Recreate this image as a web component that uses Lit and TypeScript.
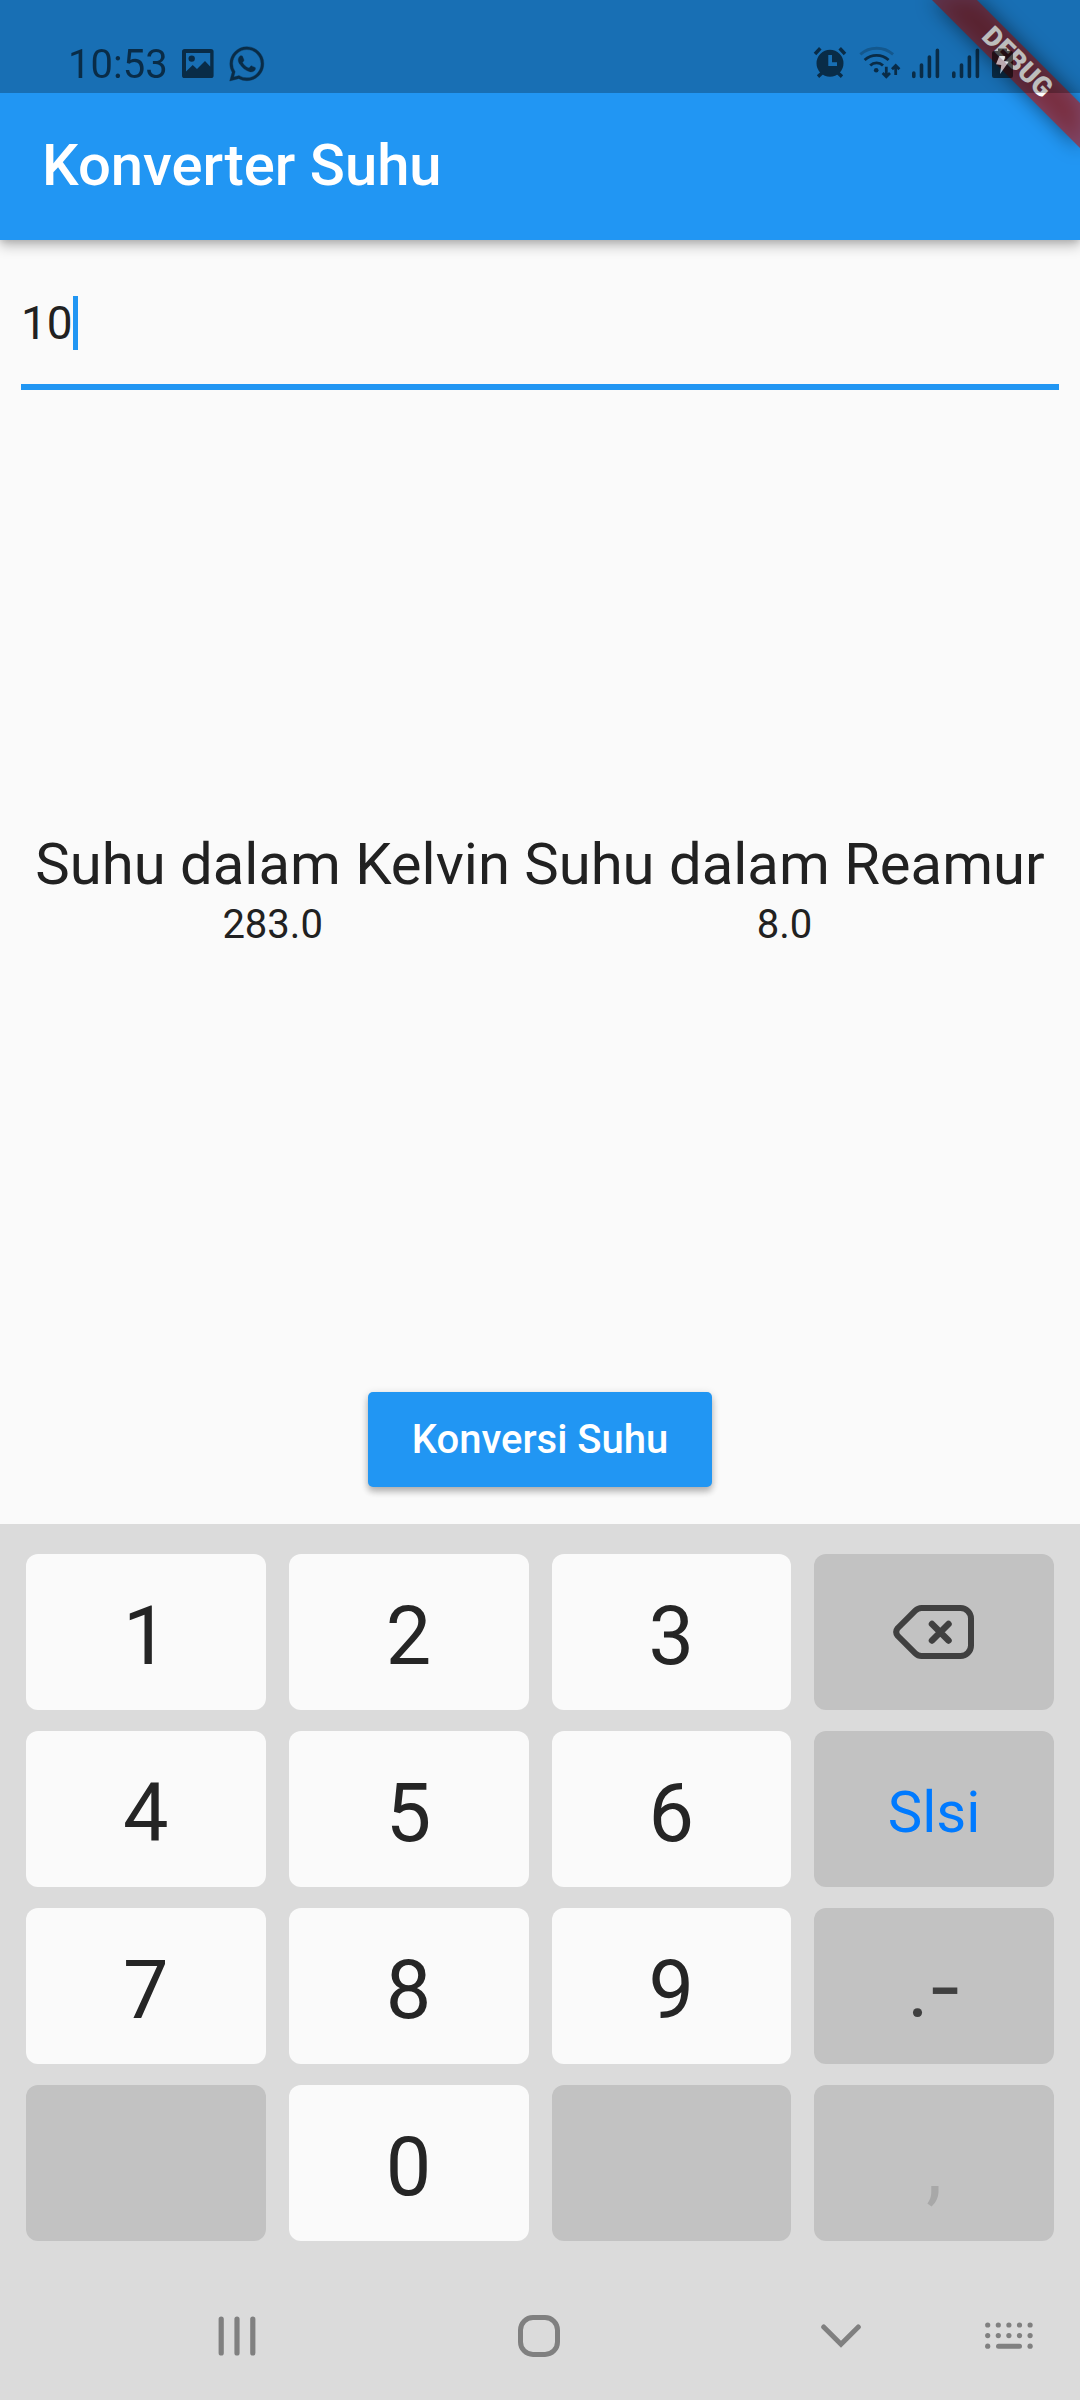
import { LitElement, html, svg, css, nothing } from "lit";
import { customElement, property, state } from "lit/decorators.js";
import { classMap } from "lit/directives/class-map.js";

const signalBars = html`
  <svg width="28" height="40" viewBox="0 0 28 40" aria-hidden="true">
    <g stroke="#000" stroke-width="3.6" stroke-linecap="round">
      <path d="M1.8 29V32.4M9.5 21V32.4M17.4 13V32.4M25.4 6.4V32.4" />
    </g>
  </svg>
`;

@customElement("status-bar")
class StatusBar extends LitElement {
  static styles = css`
    :host {
      display: flex;
      justify-content: space-between;
      align-items: flex-end;
      box-sizing: border-box;
      height: 93px;
      padding: 0 66px 9px 68px;
      background: rgba(0, 0, 0, 0.26);
    }
    .group {
      display: flex;
      align-items: flex-end;
      gap: 12px;
      opacity: 0.6;
    }
    .left {
      gap: 14px;
    }
    .time {
      font-size: 40px;
      line-height: 38px;
      color: #000;
    }
    svg {
      display: block;
      overflow: visible;
    }
  `;

  render() {
    return html`
      <div class="group left">
        <span class="time">10:53</span>
        <svg width="33" height="40" viewBox="0 0 33 40" aria-hidden="true">
          <path
            fill-rule="evenodd"
            d="M2.6 5H29a2.6 2.6 0 0 1 2.6 2.6V31.400a2.600 2.600 0 0 1-2.600 2.600H2.600A2.600 2.600 0 0 1 0 31.400V7.600A2.600 2.600 0 0 1 2.600 5ZM4 9V27.500L10.700 21L15 25L23 17L28.200 22.500V9Z"
          />
          <circle cx="9.700" cy="14.600" r="3.200" />
        </svg>
        <svg width="36" height="40" viewBox="0 0 36 40" aria-hidden="true">
          <path
            transform="translate(.6 2.700) scale(1.43)"
            stroke="#000"
            stroke-width=".25"
            d="M17.472 14.382c-.297-.149-1.758-.867-2.03-.967-.273-.099-.471-.148-.67.15-.197.297-.767.966-.94 1.164-.173.199-.347.223-.644.075-.297-.15-1.255-.463-2.39-1.475-.883-.788-1.48-1.761-1.653-2.059-.173-.297-.018-.458.13-.606.134-.133.298-.347.446-.52.149-.174.198-.298.298-.497.099-.198.05-.371-.025-.52-.075-.149-.669-1.612-.916-2.207-.242-.579-.487-.5-.669-.51-.173-.008-.371-.01-.57-.01-.198 0-.52.074-.792.372-.272.297-1.04 1.016-1.04 2.479 0 1.462 1.065 2.875 1.213 3.074.149.198 2.096 3.2 5.077 4.487.709.306 1.262.489 1.694.625.712.227 1.36.195 1.871.118.571-.085 1.758-.719 2.006-1.413.248-.694.248-1.289.173-1.413-.074-.124-.272-.198-.57-.347m-5.421 7.403h-.004a9.87 9.87 0 01-5.031-1.378l-.361-.214-3.741.982.998-3.648-.235-.374a9.86 9.86 0 01-1.51-5.26c.001-5.45 4.436-9.884 9.888-9.884 2.64 0 5.122 1.03 6.988 2.898a9.825 9.825 0 012.893 6.994c-.003 5.45-4.437 9.884-9.885 9.884m8.413-18.297A11.815 11.815 0 0012.05 0C5.495 0 .16 5.335.157 11.892c0 2.096.547 4.142 1.588 5.945L.057 24l6.305-1.654a11.882 11.882 0 005.683 1.448h.005c6.554 0 11.89-5.335 11.893-11.893a11.821 11.821 0 00-3.48-8.413Z"
          />
        </svg>
      </div>
      <div class="group">
        <svg width="34" height="40" viewBox="0 0 34 40" aria-hidden="true">
          <path
            fill-rule="evenodd"
            d="M18 5.800a13.500 13.500 0 1 0 0 27a13.500 13.500 0 1 0 0-27ZM16.300 11H20V18.300H25V22H16.300Z"
          />
          <path
            d="M3 10L8.300 4.300M33 10L27.700 4.300M6 32.600L11 28M30 32.600L25 28"
            stroke="#000"
            stroke-width="3.500"
          />
        </svg>
        <svg width="42" height="40" viewBox="0 0 42 40" aria-hidden="true">
          <g fill="none" stroke="#000" stroke-width="2.800">
            <path d="M2.300 10.400A25 25 0 0 1 35.100 10.400" opacity=".35" />
            <path d="M6.600 16A18 18 0 0 1 30.600 16" />
            <path d="M12.200 21.600A9 9 0 0 1 25 21.600" />
            <path d="M28.300 22.700V32.500M24.600 29L28.300 32.700L32 29" />
            <path d="M37.700 31V21.500M34 25.200L37.700 21.500L41.400 25.200" />
          </g>
          <circle cx="18.200" cy="26.200" r="2.300" />
        </svg>
        ${signalBars} ${signalBars}
        <svg width="22" height="40" viewBox="0 0 22 40" aria-hidden="true">
          <path
            fill-rule="evenodd"
            d="M6 4.500H15V7H19a2 2 0 0 1 2 2V32a2 2 0 0 1-2 2H2A2 2 0 0 1 0 32V9A2 2 0 0 1 2 7H6Z"
          />
          <path fill="#fff" d="M7.300 12H13.300L12 17L16.700 17.700L8 30L9.300 21L4 20.300Z" />
        </svg>
      </div>
    `;
  }
}

@customElement("debug-ribbon")
class DebugRibbon extends LitElement {
  static styles = css`
    :host {
      position: absolute;
      top: 0;
      right: 0;
      pointer-events: none;
    }
    svg {
      display: block;
    }
    text {
      font-family: Roboto, sans-serif;
      font-size: 27px;
      font-weight: 900;
      fill: #fff;
      text-anchor: middle;
    }
  `;

  render() {
    return html`
      <svg width="240" height="240" viewBox="0 0 240 240">
        <defs>
          <filter id="soft" x="-50%" y="-50%" width="200%" height="200%">
            <feGaussianBlur stdDeviation="10" />
          </filter>
        </defs>
        <path d="M92 0H137L240 103V148Z" fill="#000" fill-opacity=".5" filter="url(#soft)" />
        <path d="M92 0H137L240 103V148Z" fill="#b71c1c" fill-opacity=".627" />
        <text transform="translate(177.500 62) rotate(45)" y="9">DEBUG</text>
      </svg>
    `;
  }
}

type Key = { label: string; kind: "digit" | "erase" | "done" | "sign" | "blank" | "comma"; name?: string };

const KEYS: Key[] = [
  { label: "1", kind: "digit" },
  { label: "2", kind: "digit" },
  { label: "3", kind: "digit" },
  { label: "", kind: "erase", name: "Hapus" },
  { label: "4", kind: "digit" },
  { label: "5", kind: "digit" },
  { label: "6", kind: "digit" },
  { label: "Slsi", kind: "done" },
  { label: "7", kind: "digit" },
  { label: "8", kind: "digit" },
  { label: "9", kind: "digit" },
  { label: ".−", kind: "sign" },
  { label: "", kind: "blank", name: "Kosong" },
  { label: "0", kind: "digit" },
  { label: "", kind: "blank", name: "Kosong" },
  { label: ",", kind: "comma" },
];

const DOTS = [0, 1, 2, 3, 4].flatMap((c) =>
  [0, 1, 2].filter((r) => r < 2 || c === 0 || c === 4).map((r) => [2.7 + c * 10.6, 3 + r * 10.6])
);

const eraseIcon = html`
  <svg width="82" height="54" viewBox="0 0 82 54" aria-hidden="true">
    <g fill="none" stroke="#404040" stroke-width="6" stroke-linecap="round">
      <path
        d="M28.500 3H67.500A10.500 10.500 0 0 1 78 13.500V40.500A10.500 10.500 0 0 1 67.500 51H28.500Q25 51 22.300 48.300L4.700 30.800Q1.700 27 4.700 23.200L22.300 5.700Q25 3 28.500 3Z"
      />
      <path d="M39 19L55.500 35.500M55.500 19L39 35.500" stroke-width="6.500" />
    </g>
  </svg>
`;

@customElement("number-pad")
class NumberPad extends LitElement {
  static styles = css`
    :host {
      display: block;
      background: #dbdbdb;
    }
    button {
      font: inherit;
      border: 0;
      margin: 0;
      padding: 0;
      background: none;
      display: flex;
      align-items: center;
      justify-content: center;
    }
    .keys {
      display: grid;
      grid-template-columns: repeat(4, 1fr);
      grid-auto-rows: 156px;
      gap: 21px 23px;
      padding: 30px 26px;
    }
    .key {
      border-radius: 12px;
      background: #c2c2c2;
      color: #404040;
      font-size: 81px;
      line-height: 96px;
      padding-top: 10px;
    }
    .digit {
      background: #fafafa;
      color: #252525;
    }
    .erase {
      padding-top: 0;
    }
    .done {
      color: #007aff;
      font-size: 58px;
      padding-top: 6px;
    }
    .dash {
      font-size: 58px;
      font-weight: 700;
      vertical-align: 0.1em;
    }
    .comma {
      color: #a8a8a8;
    }
    .nav {
      display: grid;
      grid-template-columns: 9fr 9fr 5fr 72px;
      padding: 0 35px 0 201px;
    }
    .nav button {
      width: 72px;
      height: 129px;
    }
    svg {
      display: block;
    }
  `;

  private press(key: Key) {
    this.dispatchEvent(new CustomEvent("key-press", { detail: key }));
  }

  private face(key: Key) {
    if (key.kind === "erase") return eraseIcon;
    if (key.kind === "sign") return html`<span>${key.label[0]}<span class="dash">${key.label[1]}</span></span>`;
    return key.label;
  }

  render() {
    return html`
      <div class="keys">
        ${KEYS.map(
          (key) => html`
            <button
              type="button"
              class=${classMap({ key: true, [key.kind]: true })}
              aria-label=${key.name ?? nothing}
              ?disabled=${key.kind === "blank" || key.kind === "comma"}
              @click=${() => this.press(key)}
            >
              ${this.face(key)}
            </button>
          `
        )}
      </div>
      <nav class="nav">
        <button type="button" aria-label="Terbaru">
          <svg width="38" height="42" viewBox="0 0 38 42" aria-hidden="true">
            <path
              d="M3.200 4V38M19 4V38M34.800 4V38"
              stroke="#808080"
              stroke-width="5.200"
              stroke-linecap="round"
            />
          </svg>
        </button>
        <button type="button" aria-label="Beranda">
          <svg width="42" height="42" viewBox="0 0 42 42" aria-hidden="true">
            <rect
              x="2.500"
              y="2.500"
              width="37"
              height="37"
              rx="12.500"
              fill="none"
              stroke="#808080"
              stroke-width="5"
            />
          </svg>
        </button>
        <button type="button" aria-label="Tutup papan ketik">
          <svg width="40" height="24" viewBox="0 0 40 24" aria-hidden="true">
            <path
              d="M2.700 3L20 20.300L37.300 3"
              fill="none"
              stroke="#808080"
              stroke-width="5"
              stroke-linecap="round"
            />
          </svg>
        </button>
        <button type="button" aria-label="Pilih papan ketik">
          <svg width="48" height="28" viewBox="0 0 48 28" aria-hidden="true">
            ${DOTS.map(([x, y]) => svg`<circle cx=${x} cy=${y} r="2.600" fill="#808080" />`)}
            <path d="M13.500 24.200H34.500" stroke="#808080" stroke-width="5" stroke-linecap="round" />
          </svg>
        </button>
      </nav>
    `;
  }
}

@customElement("result-card")
class ResultCard extends LitElement {
  static styles = css`
    :host {
      display: flex;
      flex-direction: column;
      align-items: center;
    }
    .title {
      font-size: 58px;
      line-height: 70px;
    }
    .value {
      font-size: 40px;
      line-height: 52px;
    }
  `;

  @property() heading = "";
  @property({ type: Number }) amount = 0;

  render() {
    return html`
      <span class="title">${this.heading}</span>
      <output class="value">${this.amount.toFixed(1)}</output>
    `;
  }
}

@customElement("app-root")
class AppRoot extends LitElement {
  static styles = css`
    :host {
      display: flex;
      flex-direction: column;
      position: relative;
      min-height: 100vh;
      overflow: hidden;
      background: #fafafa;
      color: #212121;
      font-family: Roboto, sans-serif;
    }
    .bar {
      background: #2196f3;
      box-shadow: 0 6px 12px rgba(0, 0, 0, 0.24), 0 2px 6px rgba(0, 0, 0, 0.12);
    }
    status-bar {
      position: relative;
      z-index: 2;
    }
    debug-ribbon {
      z-index: 1;
    }
    .heading {
      margin: 0;
      padding: 35px 42px 38px;
      color: #fff;
      font-size: 58px;
      font-weight: 500;
      line-height: 74px;
    }
    main {
      flex: 1;
      display: flex;
      flex-direction: column;
      justify-content: space-between;
      padding: 21px;
    }
    .field {
      display: flex;
      padding: 35px 0 34px;
      border-bottom: 6px solid #2196f3;
      cursor: text;
    }
    .field input {
      font: inherit;
      font-size: 46px;
      line-height: 54px;
      height: 54px;
      min-width: 0;
      padding: 0;
      border: 0;
      outline: 0;
      background: none;
      color: inherit;
      caret-color: transparent;
    }
    .caret {
      width: 5px;
      height: 54px;
      background: #2196f3;
    }
    .results {
      display: flex;
      justify-content: space-evenly;
      padding-top: 14px;
    }
    .convert {
      align-self: center;
      margin: 16px 0;
      padding: 0 44px;
      border: 0;
      border-radius: 5px;
      background: #2196f3;
      color: #fff;
      font: inherit;
      font-size: 40px;
      font-weight: 500;
      line-height: 95px;
      box-shadow: 0 5px 6px rgba(0, 0, 0, 0.2), 0 2px 8px rgba(0, 0, 0, 0.16);
    }
  `;

  @state() private entry = "10";
  @state() private celsius = 10;

  private convert() {
    this.celsius = Number(this.entry) || 0;
  }

  private onKey(e: CustomEvent<Key>) {
    const key = e.detail;
    if (key.kind === "digit") this.entry += key.label;
    else if (key.kind === "erase") this.entry = this.entry.slice(0, -1);
    else if (key.kind === "sign") this.entry += this.entry ? "." : "-";
    else if (key.kind === "done") this.convert();
  }

  render() {
    return html`
      <header class="bar">
        <status-bar></status-bar>
        <h1 class="heading">Konverter Suhu</h1>
      </header>
      <debug-ribbon></debug-ribbon>
      <main>
        <label class="field">
          <input
            inputmode="decimal"
            aria-label="Suhu dalam Celcius"
            style="width: ${this.entry.length}ch"
            .value=${this.entry}
            @input=${(e: Event) => (this.entry = (e.target as HTMLInputElement).value)}
          />
          <span class="caret"></span>
        </label>
        <div class="results">
          <result-card heading="Suhu dalam Kelvin" .amount=${this.celsius + 273}></result-card>
          <result-card heading="Suhu dalam Reamur" .amount=${this.celsius * 0.8}></result-card>
        </div>
        <button class="convert" type="button" @click=${this.convert}>Konversi Suhu</button>
      </main>
      <number-pad @key-press=${this.onKey}></number-pad>
    `;
  }
}
